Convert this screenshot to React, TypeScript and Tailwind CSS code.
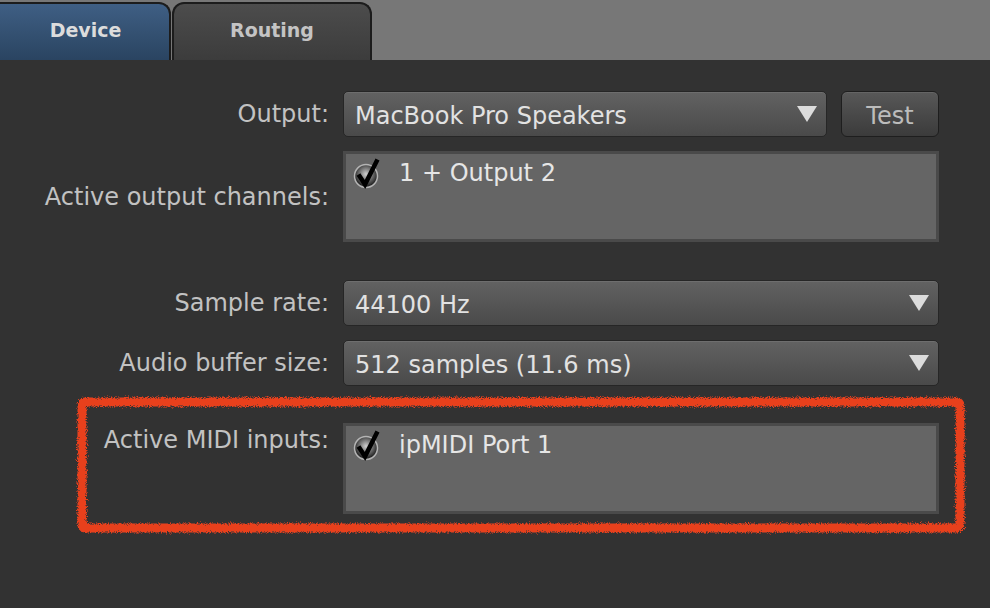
import type { ReactNode } from "react";

const font = { fontFamily: '"DejaVu Sans", "Liberation Sans", sans-serif' };

function Arrow() {
  return (
    <svg width="20" height="16" viewBox="0 0 20 16" className="shrink-0">
      <path d="M0 0 H20 L10 16 Z" fill="#dcdcdc" />
    </svg>
  );
}

function Check() {
  return (
    <svg width="30" height="32" viewBox="0 0 30 32" className="shrink-0">
      <defs>
        <radialGradient id="ball" cx="50%" cy="42%" r="58%">
          <stop offset="0%" stopColor="#d0d0d0" />
          <stop offset="50%" stopColor="#707070" />
          <stop offset="88%" stopColor="#262626" />
          <stop offset="100%" stopColor="#3a3a3a" />
        </radialGradient>
      </defs>
      <circle cx="13" cy="19" r="11.5" fill="url(#ball)" stroke="#b4b4b4" strokeWidth="1.5" />
      <path
        d="M5.5 17.5 L12 27.5 L24.5 2.5"
        fill="none"
        stroke="#000"
        strokeWidth="4.5"
        strokeLinejoin="miter"
        strokeLinecap="butt"
      />
    </svg>
  );
}

function Dropdown({ value, className = "" }: { value: string; className?: string }) {
  return (
    <div
      className={`flex h-[46px] items-center justify-between rounded-[5px] border border-[#262626] bg-gradient-to-b from-[#626262] to-[#4a4a4a] pl-[11px] pr-[9px] text-[24px] text-[#e2e2e2] shadow-[inset_0_1px_0_rgba(255,255,255,0.08)] ${className}`}
    >
      <span className="pt-[3px] leading-none">{value}</span>
      <Arrow />
    </div>
  );
}

function ListBox({ children }: { children: ReactNode }) {
  return (
    <div className="h-[91px] border-[3px] border-[#4a4a4a] bg-[#656565] pl-[7px] pt-[3px]">
      <div className="flex items-center gap-[16px] text-[24px] text-[#e6e6e6]">
        <Check />
        <span className="leading-none">{children}</span>
      </div>
    </div>
  );
}

function Label({ children, className = "" }: { children: ReactNode; className?: string }) {
  return (
    <div className={`text-right text-[24px] leading-none text-[#c2c2c2] ${className}`}>
      {children}
    </div>
  );
}

function RoughFrame() {
  return (
    <svg
      className="pointer-events-none absolute left-[74px] top-[-29px]"
      width="894"
      height="142"
      viewBox="0 0 894 142"
    >
      <defs>
        <filter id="rough" x="-5%" y="-10%" width="110%" height="120%">
          <feTurbulence type="fractalNoise" baseFrequency="1.1" numOctaves="3" seed="7" />
          <feDisplacementMap in="SourceGraphic" scale="6" />
        </filter>
      </defs>
      <rect
        x="8"
        y="8"
        width="878"
        height="126"
        rx="3"
        fill="none"
        stroke="#e8401f"
        strokeWidth="9"
        filter="url(#rough)"
      />
    </svg>
  );
}

export default function App() {
  return (
    <div className="h-[608px] w-[990px] overflow-hidden bg-[#323232]" style={font}>
      {/* tab strip */}
      <div className="flex h-[60px] items-end bg-[#777777]">
        <div className="ml-[-12px] flex h-[58px] w-[183px] items-center justify-center rounded-t-[12px] border-2 border-b-0 border-[#1c1c1c] bg-gradient-to-b from-[#3f5f84] to-[#2a4461] pb-[3px] pl-[12px] text-[19px] font-bold text-[#dcdcdc]">
          Device
        </div>
        <div className="ml-[1px] flex h-[58px] w-[200px] items-center justify-center rounded-t-[12px] border-2 border-b-0 border-[#1c1c1c] bg-gradient-to-b from-[#4c4c4c] to-[#3c3c3c] pb-[3px] text-[19px] font-bold text-[#c4c4c4]">
          Routing
        </div>
      </div>

      {/* settings form */}
      <div className="grid grid-cols-[329px_1fr] items-center gap-x-[14px] pr-[51px] pt-[31px]">
        <Label>Output:</Label>
        <div className="flex h-[46px] gap-[14px]">
          <Dropdown value="MacBook Pro Speakers" className="flex-1" />
          <button
            type="button"
            className="h-[46px] w-[98px] rounded-[6px] border border-[#1e1e1e] bg-gradient-to-b from-[#585858] to-[#3b3b3b] pt-[3px] text-[24px] leading-none text-[#bcbcbc] shadow-[inset_0_1px_0_rgba(255,255,255,0.08)]"
          >
            Test
          </button>
        </div>

        <Label className="mt-[14px]">Active output channels:</Label>
        <div className="mt-[14px]">
          <ListBox>1 + Output 2</ListBox>
        </div>

        <Label className="mt-[38px]">Sample rate:</Label>
        <Dropdown value="44100 Hz" className="mt-[38px]" />

        <Label className="mt-[14px]">Audio buffer size:</Label>
        <Dropdown value="512 samples (11.6 ms)" className="mt-[14px]" />

        <div className="relative col-span-2 mt-[37px] grid grid-cols-[329px_1fr] gap-x-[14px]">
          <Label className="self-start pt-[5px]">Active MIDI inputs:</Label>
          <ListBox>ipMIDI Port 1</ListBox>
          <RoughFrame />
        </div>
      </div>
    </div>
  );
}
